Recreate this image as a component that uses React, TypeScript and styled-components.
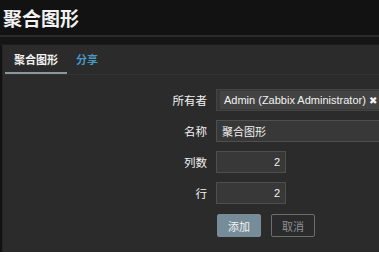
import React from "react";
import styled, { createGlobalStyle } from "styled-components";

const Global = createGlobalStyle`
  html, body { margin: 0; padding: 0; background: #ffffff; }
  body { font-family: "Liberation Sans", "Noto Sans CJK SC", sans-serif; }
  * { box-sizing: border-box; }
`;

const Page = styled.div`
  width: 379px;
  height: 252px;
  background: #121212;
  display: flex;
  flex-direction: column;
  overflow: hidden;
`;

const Header = styled.header`
  height: 35px;
  display: flex;
  align-items: center;
  padding-left: 3px;
  background: #121212;
`;

const Title = styled.h1`
  margin: 0;
  font-size: 19px;
  font-weight: bold;
  color: #f2f2f2;
`;

const Band = styled.div`
  height: 10px;
  background: #151515;
  border-top: 2px solid #2a2a2a;
  border-bottom: 1px solid #1c1c1c;
`;

const Panel = styled.section`
  flex: 1;
  margin-left: 2px;
  background: #2b2b2b;
  border-left: 1px solid #262626;
  display: flex;
  flex-direction: column;
`;

const TabBar = styled.nav`
  height: 30px;
  display: flex;
  align-items: stretch;
  border-bottom: 1px solid #323232;
  padding-left: 2px;
`;

const Tab = styled.div<{ $active?: boolean }>`
  display: flex;
  align-items: center;
  padding: 0 9px;
  font-size: 11px;
  font-weight: bold;
  color: ${(p) => (p.$active ? "#f2f2f2" : "#4796c4")};
  border-bottom: 2px solid ${(p) => (p.$active ? "#8a979d" : "transparent")};
`;

const Form = styled.div`
  display: grid;
  grid-template-columns: 204px 1fr;
  column-gap: 9px;
  row-gap: 9px;
  padding-top: 14px;
  align-items: center;
`;

const Label = styled.div`
  text-align: right;
  font-size: 11.5px;
  color: #f2f2f2;
`;

const MultiSelect = styled.div`
  height: 22px;
  background: #383838;
  border: 1px solid #444;
  border-right: none;
  display: flex;
  align-items: center;
  padding-left: 3px;
  overflow: hidden;
`;

const Chip = styled.span`
  display: inline-flex;
  align-items: center;
  gap: 3px;
  height: 18px;
  padding: 0 4px;
  background: #434343;
  font-size: 11px;
  color: #f2f2f2;
  white-space: nowrap;
`;

const Remove = styled.span`
  font-size: 10px;
  color: #f2f2f2;
`;

const TextInput = styled.div<{ $width?: number }>`
  height: 22px;
  width: ${(p) => (p.$width ? `${p.$width}px` : "auto")};
  background: #383838;
  border: 1px solid #4f4f4f;
  ${(p) => (p.$width ? "" : "border-right: none;")}
  display: flex;
  align-items: center;
  justify-content: ${(p) => (p.$width ? "flex-end" : "flex-start")};
  padding: 0 5px;
  font-size: 11px;
  color: #f2f2f2;
`;

const Buttons = styled.div`
  grid-column: 2;
  display: flex;
  gap: 10px;
  padding-left: 1px;
  padding-top: 1px;
`;

const Button = styled.button<{ $primary?: boolean }>`
  height: 23px;
  width: 44px;
  padding: 0;
  font-family: inherit;
  font-size: 11px;
  border-radius: 2px;
  border: 1px solid ${(p) => (p.$primary ? "#768d99" : "#6b6e70")};
  background: ${(p) => (p.$primary ? "#768d99" : "transparent")};
  color: ${(p) => (p.$primary ? "#f2f2f2" : "#8c9195")};
`;

export default function App() {
  return (
    <>
      <Global />
      <Page>
        <Header>
          <Title>聚合图形</Title>
        </Header>
        <Band />
        <Panel>
          <TabBar>
            <Tab $active>聚合图形</Tab>
            <Tab>分享</Tab>
          </TabBar>
          <Form>
            <Label>所有者</Label>
            <MultiSelect>
              <Chip>
                Admin (Zabbix Administrator) <Remove>✖</Remove>
              </Chip>
            </MultiSelect>
            <Label>名称</Label>
            <TextInput>聚合图形</TextInput>
            <Label>列数</Label>
            <TextInput $width={70}>2</TextInput>
            <Label>行</Label>
            <TextInput $width={70}>2</TextInput>
            <Buttons>
              <Button $primary>添加</Button>
              <Button>取消</Button>
            </Buttons>
          </Form>
        </Panel>
      </Page>
    </>
  );
}
